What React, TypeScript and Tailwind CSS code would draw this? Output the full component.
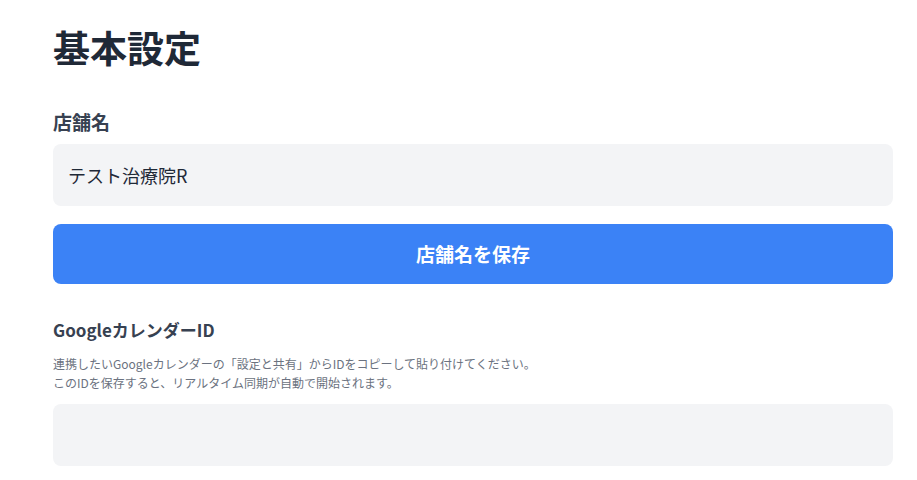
import React from 'react';

export default function App() {
  return (
    <div
      className="min-h-screen bg-white px-[53px] pt-[24px]"
      style={{ fontFamily: '"Noto Sans CJK JP", "Noto Sans", sans-serif' }}
    >
      <div className="w-[840px]">
        {/* 見出し */}
        <h1 className="text-[37px] leading-[46px] font-bold text-[#1f2937]">基本設定</h1>

        {/* 店舗名 */}
        <div className="mt-[40px]">
          <label className="block text-[19px] leading-6 font-semibold text-[#374151]">店舗名</label>
          <input
            type="text"
            defaultValue="テスト治療院R"
            className="mt-[10px] w-full h-[62px] rounded-lg bg-[#f3f4f6] px-[15px] text-[18px] text-[#1f2937] outline-none"
          />
          <button className="mt-[18px] w-full h-[60px] rounded-lg bg-[#3b82f6] text-white text-[19px] font-bold">
            店舗名を保存
          </button>
        </div>

        {/* Googleカレンダー */}
        <div className="mt-[34px]">
          <label className="block text-[17px] leading-6 font-semibold text-[#374151]">GoogleカレンダーID</label>
          <p className="mt-[12px] text-[12px] leading-[19px] text-[#6b7280]">
            連携したいGoogleカレンダーの「設定と共有」からIDをコピーして貼り付けてください。
            <br />
            このIDを保存すると、リアルタイム同期が自動で開始されます。
          </p>
          <input
            type="text"
            className="mt-[12px] w-full h-[62px] rounded-lg bg-[#f3f4f6] px-[15px] text-[18px] text-[#1f2937] outline-none"
          />
        </div>
      </div>
    </div>
  );
}
